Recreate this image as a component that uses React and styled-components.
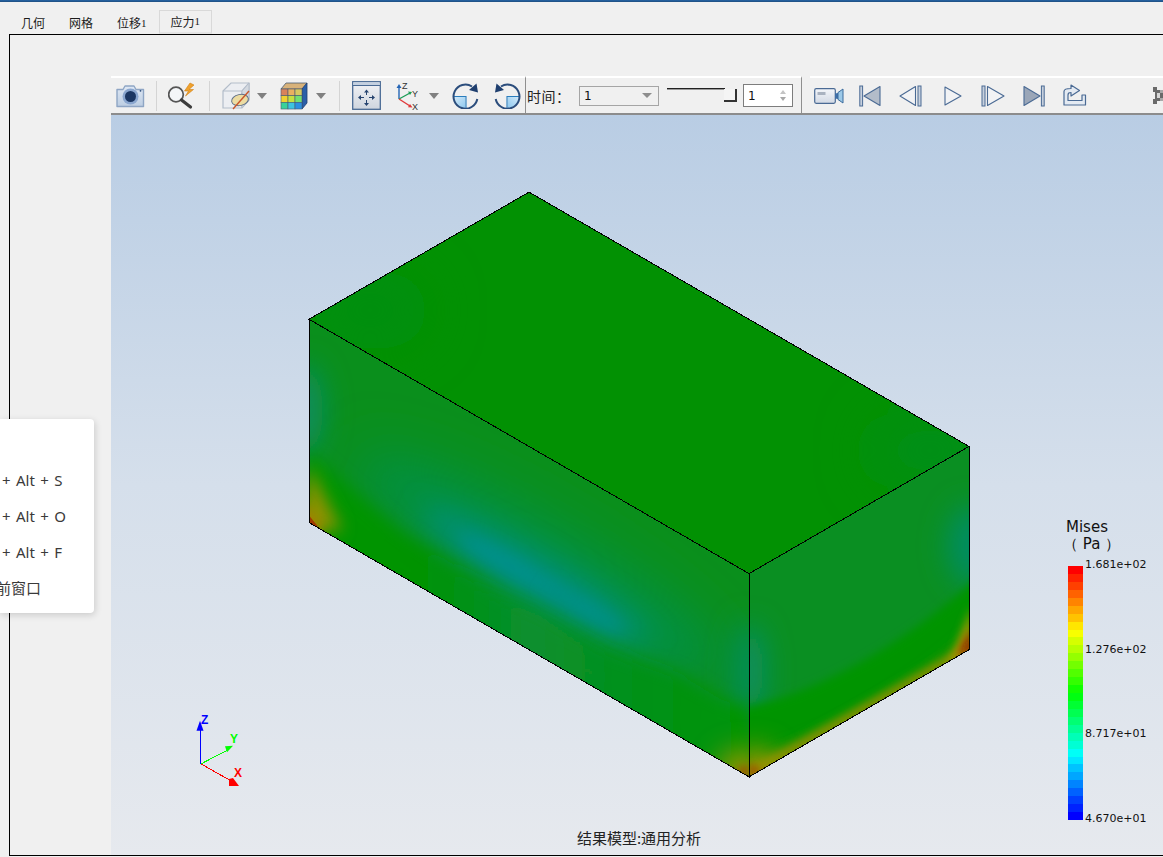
import styled, { createGlobalStyle } from "styled-components";

const GlobalStyle = createGlobalStyle`
  html, body {
    margin: 0;
    padding: 0;
    width: 100%;
    height: 100%;
    overflow: hidden;
    background: #f0f0f0;
  }
  #root {
    height: 100%;
  }
`;

const CJK = `"Noto Sans CJK SC", "Noto Sans", sans-serif`;

const Page = styled.div`
  position: relative;
  display: flex;
  flex-direction: column;
  width: 1163px;
  height: 857px;
  overflow: hidden;
  background: #f0f0f0;
  font-family: ${CJK};
  color: #222;
`;

const TitleEdge = styled.div`
  height: 2px;
  flex: none;
  background: linear-gradient(to bottom, #1d4f86 0, #2a6fb3 50%, #16385f 100%);
`;

const TabBar = styled.div`
  display: flex;
  align-items: flex-end;
  height: 32px;
  padding-left: 9px;
  flex: none;
`;

const Tab = styled.div`
  box-sizing: border-box;
  height: ${(p) => (p.$active ? "24px" : "22px")};
  padding: ${(p) => (p.$active ? "0 11px" : "0 12px")};
  display: flex;
  align-items: center;
  font-size: 12px;
  line-height: 1;
  color: #1c1c1c;
  background: #f0f0f0;
  border: ${(p) => (p.$active ? "1px solid #d9d9d9" : "none")};
  border-bottom: ${(p) => (p.$active ? "2px solid #e4e4e4" : "none")};
`;

const TabNum = styled.span`
  font-family: "Liberation Serif", serif;
  font-size: 11px;
`;

const Frame = styled.div`
  box-sizing: border-box;
  display: flex;
  height: 822px;
  margin-left: 9px;
  flex: none;
  border-top: 1px solid #000;
  border-left: 1px solid #000;
  border-bottom: 1px solid #000;
`;

const Gutter = styled.div`
  width: 101px;
  flex: none;
`;

const Main = styled.div`
  flex: 1;
  min-width: 0;
  display: flex;
  flex-direction: column;
  padding-top: 41px;
`;

const Toolbar = styled.div`
  box-sizing: border-box;
  display: flex;
  height: 39px;
  flex: none;
  border-bottom: 2px solid #8c8c8c;
`;

const ToolSection = styled.div`
  box-sizing: border-box;
  display: flex;
  align-items: center;
  height: 37px;
  width: ${(p) => p.$width}px;
  flex: none;
  border-top: ${(p) => (p.$bare ? "none" : "2px solid #fff")};
  border-right: ${(p) => (p.$divider ? "1px solid #8f8f8f" : "none")};
  padding-left: ${(p) => p.$pad || 0}px;
`;

const Tool = styled.div`
  display: flex;
  flex: none;
  align-items: center;
  justify-content: center;
  margin-left: ${(p) => p.$left || 0}px;
  svg {
    display: block;
  }
`;

const Sep = styled.div`
  width: 1px;
  height: 30px;
  flex: none;
  background: #d4d4d4;
  margin-left: ${(p) => p.$left}px;
`;

const Caret = styled.div`
  width: 0;
  height: 0;
  flex: none;
  margin-left: ${(p) => p.$left}px;
  border-left: 5px solid transparent;
  border-right: 5px solid transparent;
  border-top: 6px solid #808080;
`;

const TimeLabel = styled.div`
  font-size: 14px;
  letter-spacing: 0.5px;
  width: 52px;
  flex: none;
  white-space: nowrap;
`;

const SelectBox = styled.div`
  box-sizing: border-box;
  width: 80px;
  height: 20px;
  display: flex;
  align-items: center;
  justify-content: space-between;
  padding: 0 6px 0 4px;
  flex: none;
  border: 1px solid #a5a5a5;
  font-family: "DejaVu Sans", sans-serif;
  font-size: 12px;
  color: #111;
`;

const SmallCaret = styled.div`
  width: 0;
  height: 0;
  border-left: 5px solid transparent;
  border-right: 5px solid transparent;
  border-top: 5px solid #8d8d8d;
`;

const Slider = styled.div`
  position: relative;
  width: 70px;
  height: 14px;
  margin-left: 8px;
  margin-top: -2px;
  flex: none;
`;

const SliderTrack = styled.div`
  position: absolute;
  left: 0;
  right: 12px;
  top: 0;
  height: 2px;
  background: linear-gradient(to bottom, #222 0 50%, #9a9a9a 50% 100%);
`;

const SliderThumb = styled.div`
  position: absolute;
  right: 0;
  top: 1px;
  box-sizing: border-box;
  width: 13px;
  height: 13px;
  background: #f4f4f4;
  border-right: 2px solid #333;
  border-bottom: 2px solid #333;
`;

const SpinBox = styled.div`
  box-sizing: border-box;
  width: 50px;
  height: 23px;
  margin-left: 6px;
  display: flex;
  align-items: center;
  justify-content: space-between;
  padding: 0 6px 0 4px;
  flex: none;
  background: #fff;
  border: 1px solid #7d7d7d;
  font-family: "DejaVu Sans", sans-serif;
  font-size: 12px;
  color: #111;
`;

const SpinArrows = styled.div`
  display: flex;
  flex-direction: column;
  gap: 3px;
`;

const SpinArrow = styled.div`
  width: 0;
  height: 0;
  border-left: 3px solid transparent;
  border-right: 3px solid transparent;
  border-top: ${(p) => (p.$down ? "4px solid #a8a8a8" : "none")};
  border-bottom: ${(p) => (p.$down ? "none" : "4px solid #c4c4c4")};
`;

const Viewport = styled.div`
  position: relative;
  flex: 1;
  min-height: 0;
  overflow: hidden;
  background: linear-gradient(to bottom, #b9cde4 0%, #d5dfeb 50%, #e6e9ee 100%);
`;

const Scene = styled.svg`
  display: block;
  width: 100%;
  height: 100%;
`;

const Legend = styled.div`
  position: absolute;
  left: 955px;
  top: 404px;
  width: 100px;
`;

const LegendTitle = styled.div`
  font-family: "DejaVu Sans", sans-serif;
  font-size: 15px;
  line-height: 17px;
  color: #111;
  white-space: nowrap;
`;

const LegendUnit = styled.div`
  margin-left: -3px;
`;

const LegendBody = styled.div`
  display: flex;
  margin-top: 13px;
  margin-left: 2px;
`;

const ColorBar = styled.div`
  width: 15px;
  height: 254px;
  display: flex;
  flex-direction: column;
`;

const Band = styled.div`
  flex: 1;
`;

const LegendTicks = styled.div`
  height: 267px;
  margin-left: 2px;
  margin-top: -8px;
  display: flex;
  flex-direction: column;
  justify-content: space-between;
  font-family: "DejaVu Sans", sans-serif;
  font-size: 11px;
  line-height: 13px;
  color: #111;
  white-space: nowrap;
`;

const ModelCaption = styled.div`
  position: absolute;
  left: 0;
  right: 0;
  bottom: 8px;
  padding-left: 4px;
  text-align: center;
  font-size: 15px;
  line-height: 18px;
  color: #222;
`;

const ShortcutMenu = styled.div`
  position: absolute;
  left: 0;
  top: 419px;
  box-sizing: border-box;
  width: 94px;
  height: 194px;
  padding-top: 43px;
  overflow: hidden;
  background: #fff;
  border-radius: 0 4px 4px 0;
  box-shadow: 1px 2px 7px rgba(0, 0, 0, 0.16);
`;

const ShortcutRow = styled.div`
  height: 36px;
  line-height: 36px;
  padding-left: 2px;
  margin-left: ${(p) => p.$shift || 0}px;
  font-family: "Noto Sans", "Noto Sans CJK SC", sans-serif;
  font-size: 15px;
  word-spacing: 1.5px;
  color: #3a3a3a;
  white-space: nowrap;
`;

const BLUE = "#4a6a94";

const CameraIcon = () => (
  <svg width="29" height="25" viewBox="0 0 29 25">
    <defs>
      <linearGradient id="camBody" x1="0" y1="0" x2="0" y2="1">
        <stop offset="0" stopColor="#dfe8f4" />
        <stop offset="1" stopColor="#bccde2" />
      </linearGradient>
    </defs>
    <path d="M1 6.5h6l2-3.5h9l2 3.5h7.5v17H1z" fill="url(#camBody)" stroke="#8ea5c4" strokeWidth="1.4" strokeLinejoin="round" />
    <circle cx="14.5" cy="13.5" r="8" fill="#8aa6cf" />
    <circle cx="14.5" cy="13.5" r="5.5" fill="#1c3763" />
    <circle cx="24.5" cy="7.8" r="0.9" fill="#30507e" />
  </svg>
);

const QuickZoomIcon = () => (
  <svg width="30" height="28" viewBox="0 0 30 28">
    <path d="M22 1l-5.500 8h4l-3 5 8-6.500h-4.500L26 3z" fill="#f0a12c" stroke="#cf7f16" strokeWidth="0.6" />
    <circle cx="8" cy="12.500" r="7.300" fill="#f4f6f8" stroke="#555" strokeWidth="1.700" />
    <path d="M13.500 18l9 7" stroke="#3c3c3c" strokeWidth="3.200" strokeLinecap="round" />
  </svg>
);

const HideCubeIcon = () => (
  <svg width="29" height="29" viewBox="0 0 29 29">
    <path d="M1 10L9 2h18v17l-7 8H1z" fill="#eceef2" stroke="#b3bdca" strokeWidth="1.200" />
    <path d="M1 10h19v17M20 10l7-8" fill="none" stroke="#b3bdca" strokeWidth="1.200" />
    <path d="M20 10l7-8v17l-7 8z" fill="#d4d9e0" stroke="#b3bdca" strokeWidth="1" />
    <ellipse cx="18" cy="19" rx="8.500" ry="5.500" fill="#ecdca2" stroke="#5d6e88" strokeWidth="1" transform="rotate(-12 18 19)" />
    <path d="M11 28L27 10" stroke="#c9552a" strokeWidth="1.400" />
  </svg>
);

const ColorCubeIcon = () => {
  const rows = [
    ["#d9825a", "#e9b060", "#d8c860"],
    ["#f0d030", "#c4e040", "#72e070"],
    ["#38d29a", "#3cc4e0", "#2a90e0"],
  ];
  return (
    <svg width="28" height="28" viewBox="0 0 28 28">
      <path d="M1 7l5-6h21l-5 6z" fill="#d8b27a" stroke="#4a5a72" strokeWidth="0.8" />
      <path d="M22 7l5-6v20l-5 6z" fill="#2a5fa8" stroke="#213f70" strokeWidth="0.8" />
      {rows.map((row, r) =>
        row.map((color, c) => (
          <rect key={`${r}-${c}`} x={1 + c * 7} y={7 + r * 6.670} width="7" height="6.670" fill={color} stroke="#4a5a72" strokeWidth="0.6" />
        ))
      )}
    </svg>
  );
};

const FitIcon = () => (
  <svg width="29" height="29" viewBox="0 0 29 29">
    <defs>
      <linearGradient id="fitBg" x1="0" y1="0" x2="0" y2="1">
        <stop offset="0" stopColor="#f2f3f6" />
        <stop offset="1" stopColor="#cfd5de" />
      </linearGradient>
    </defs>
    <rect x="0.700" y="0.700" width="27.600" height="27.600" fill="url(#fitBg)" stroke={BLUE} strokeWidth="1.300" />
    <rect x="1.300" y="1.300" width="26.400" height="3" fill="#c4d0e0" />
    <path d="M1 4.500h27" stroke={BLUE} strokeWidth="1" />
    <path d="M14.500 8.500l-2.500 3h5zM14.500 25l-2.500-3h5zM6 16.500l3-2.500v5zM23 16.500l-3-2.500v5z" fill="#27446f" />
    <path d="M14.500 11v3M14.500 19v3M9 16.500h3M17 16.500h3" stroke="#27446f" strokeWidth="1" />
  </svg>
);

const AxesIcon = () => (
  <svg width="26" height="28" viewBox="0 0 26 28">
    <path d="M5 17V5" stroke="#2565b5" strokeWidth="1.400" />
    <path d="M5 2l-2.500 4h5z" fill="#2565b5" />
    <path d="M5 17l11-6" stroke="#1d9c56" strokeWidth="1.400" />
    <path d="M18 10l-4 -0.500 2 3.500z" fill="#1d9c56" />
    <path d="M5 17l11 7" stroke="#e0383a" strokeWidth="1.400" />
    <path d="M18.500 25.500l-4.500-0.300 2-3.200z" fill="#e0383a" />
    <text x="8" y="7" fontFamily="Liberation Sans, sans-serif" fontSize="9" fill="#333">Z</text>
    <text x="18" y="15" fontFamily="Liberation Sans, sans-serif" fontSize="9" fill="#333">Y</text>
    <text x="18" y="27.500" fontFamily="Liberation Sans, sans-serif" fontSize="9" fill="#333">X</text>
  </svg>
);

const RotateIcon = ({ flip, id }) => (
  <svg width="27" height="27" viewBox="0 0 27 27" style={flip ? { transform: "scaleX(-1)" } : undefined}>
    <defs>
      <linearGradient id={id} x1="0" y1="0" x2="1" y2="1">
        <stop offset="0" stopColor="#d6ebf9" />
        <stop offset="1" stopColor="#8ec8ee" />
      </linearGradient>
    </defs>
    <path d="M1.500 14.500h12v11.500A12 12 0 0 1 1.500 14.500z" fill={`url(#${id})`} />
    <path d="M1.500 14.500h12.500V26" fill="none" stroke="#2a7dbd" strokeWidth="1.100" />
    <path d="M20 4.500A12 12 0 1 0 25.300 17" fill="none" stroke="#2b4d7c" strokeWidth="2" />
    <path d="M24.500 1.500l1.500 9-9-2.500z" fill="#1f3f6f" />
  </svg>
);

const VideoIcon = () => (
  <svg width="30" height="18" viewBox="0 0 30 18">
    <defs>
      <linearGradient id="vidBody" x1="0" y1="0" x2="0" y2="1">
        <stop offset="0" stopColor="#f4f6fa" />
        <stop offset="1" stopColor="#d2d9e4" />
      </linearGradient>
    </defs>
    <rect x="0.700" y="1.700" width="20.600" height="14.600" rx="1.500" fill="url(#vidBody)" stroke={BLUE} strokeWidth="1.200" />
    <rect x="3.500" y="5" width="8" height="3" fill="#a9b2c0" />
    <path d="M21 6.500L24 6v6l-3-.5z" fill="#3f6fa8" />
    <path d="M24 5.500L29 2v14l-5-3.500z" fill="#9cc9e8" stroke="#3a6a9c" strokeWidth="1" />
  </svg>
);

const FirstIcon = () => (
  <svg width="22" height="22" viewBox="0 0 22 22">
    <rect x="0.800" y="1" width="2.800" height="20" fill="#c7d0dd" stroke={BLUE} strokeWidth="1" />
    <path d="M21 1.500v19L5 11z" fill="#b3bcc9" stroke={BLUE} strokeWidth="1.100" strokeLinejoin="round" />
  </svg>
);

const PrevIcon = () => (
  <svg width="23" height="22" viewBox="0 0 23 22">
    <path d="M16.500 1.500v19L1 11z" fill="#f2f3f5" stroke={BLUE} strokeWidth="1.100" strokeLinejoin="round" />
    <rect x="19" y="1" width="3" height="20" fill="#c7d0dd" stroke={BLUE} strokeWidth="1" />
  </svg>
);

const PlayIcon = () => (
  <svg width="18" height="20" viewBox="0 0 18 20">
    <path d="M1 1v18l16-9z" fill="#f2f3f5" stroke={BLUE} strokeWidth="1.100" strokeLinejoin="round" />
  </svg>
);

const NextIcon = () => (
  <svg width="24" height="22" viewBox="0 0 24 22">
    <rect x="1" y="1" width="3" height="20" fill="#c7d0dd" stroke={BLUE} strokeWidth="1" />
    <path d="M6.500 1.500v19L23 11z" fill="#f2f3f5" stroke={BLUE} strokeWidth="1.100" strokeLinejoin="round" />
  </svg>
);

const LastIcon = () => (
  <svg width="22" height="22" viewBox="0 0 22 22">
    <path d="M1 1.500v19L17 11z" fill="#9aa6b8" stroke={BLUE} strokeWidth="1.100" strokeLinejoin="round" />
    <rect x="18.400" y="1" width="2.800" height="20" fill="#c7d0dd" stroke={BLUE} strokeWidth="1" />
  </svg>
);

const ExportIcon = () => (
  <svg width="24" height="23" viewBox="0 0 24 23">
    <path
      d="M1 7.500C1 5.500 3 4.500 8 4.500V1l8.500 5.500L8 12V8.500C6 8.500 5 9 5 11v5.500h14V11h3.500v10H1z"
      fill="#e4eaf2"
      stroke={BLUE}
      strokeWidth="1.200"
      strokeLinejoin="round"
    />
  </svg>
);

const GripIcon = () => (
  <svg width="10" height="17" viewBox="0 0 10 17" shapeRendering="crispEdges">
    <path d="M0 0h4v3h3v3h3v5H7v3H4v3H0v-5h2V5H0z" fill="#6a6a6a" />
    <path d="M4 6h3v5H4z" fill="#d6d6d6" />
    <path d="M7 3h3v3H7zM7 11h3v3H7z" fill="#a8a8a8" />
  </svg>
);

// bands of the colour scale, red at the top, blue at the bottom
const BAND_COUNT = 32;
const bands = Array.from({ length: BAND_COUNT }, (_, i) => {
  const hue = (i / (BAND_COUNT - 1)) * 240;
  return `hsl(${Math.round(hue)}, 100%, 50%)`;
});

const FRONT = "309,319 749,573 749,776 309,522";
const RIGHT = "749,573 969,446 969,649 749,776";
const TOP = "529,192 969,446 749,573 309,319";

const Blur = ({ id, amount }) => (
  <filter id={id} x="-300%" y="-300%" width="700%" height="700%">
    <feGaussianBlur stdDeviation={amount} />
  </filter>
);

const StressScene = () => (
  <Scene viewBox="111 115 1052 739" preserveAspectRatio="none">
    <defs>
      <clipPath id="clipTop"><polygon points={TOP} /></clipPath>
      <clipPath id="clipFront"><polygon points={FRONT} /></clipPath>
      <clipPath id="clipRight"><polygon points={RIGHT} /></clipPath>
      <Blur id="blur4" amount="4" />
      <Blur id="blur8" amount="8" />
      <Blur id="blur14" amount="14" />
      <Blur id="blur26" amount="26" />
      <linearGradient id="lowerBand" gradientUnits="userSpaceOnUse" x1="309" y1="0" x2="749" y2="0">
        <stop offset="0" stopColor="#039503" />
        <stop offset="0.25" stopColor="#049303" />
        <stop offset="0.5" stopColor="#078f30" />
        <stop offset="0.75" stopColor="#069118" />
        <stop offset="1" stopColor="#039503" />
      </linearGradient>
    </defs>

    <g clipPath="url(#clipTop)">
      <polygon points={TOP} fill="#029103" />
      <ellipse cx="930" cy="450" rx="60" ry="40" fill="#068f14" filter="url(#blur26)" />
      <ellipse cx="370" cy="310" rx="60" ry="40" fill="#058f0e" filter="url(#blur26)" />
    </g>

    <g clipPath="url(#clipFront)">
      <polygon points={FRONT} fill="#0a8f1c" />
      <ellipse cx="305" cy="410" rx="18" ry="46" fill="#078d62" filter="url(#blur14)" />
      <ellipse cx="540" cy="565" rx="210" ry="40" transform="rotate(30 540 565)" fill="#05904a" filter="url(#blur26)" />
      <ellipse cx="535" cy="575" rx="130" ry="20" transform="rotate(30 535 575)" fill="#008f78" filter="url(#blur14)" />
      <ellipse cx="510" cy="565" rx="60" ry="9" transform="rotate(30 510 565)" fill="#00908e" filter="url(#blur8)" />
      <ellipse cx="585" cy="608" rx="45" ry="8" transform="rotate(30 585 608)" fill="#00908a" filter="url(#blur8)" />
      <ellipse cx="748" cy="670" rx="14" ry="50" fill="#068d5e" filter="url(#blur14)" />
      <polygon points="309,452 400,530 500,594 600,646 680,674 720,698 749,708 760,800 300,540" fill="url(#lowerBand)" filter="url(#blur8)" />
      <polygon points="309,466 342,530 300,530" fill="#8f9200" filter="url(#blur8)" />
      <polygon points="303,498 325,530 303,530" fill="#a08400" filter="url(#blur4)" />
      <polygon points="309,515 318,526 309,525" fill="#a03a00" />
      <ellipse cx="742" cy="770" rx="24" ry="20" fill="#a09600" filter="url(#blur14)" />
      <polygon points="734,770 749,778 749,764" fill="#a04a00" filter="url(#blur4)" />
    </g>

    <g clipPath="url(#clipRight)">
      <polygon points={RIGHT} fill="#0a8f22" />
      <ellipse cx="972" cy="545" rx="24" ry="40" fill="#058d62" filter="url(#blur14)" />
      <ellipse cx="750" cy="670" rx="14" ry="46" fill="#078e6a" filter="url(#blur14)" />
      <path d="M735 708C800 700 900 650 985 570V680L735 800z" fill="#049402" filter="url(#blur4)" />
      <path d="M740 762C820 745 900 700 980 630V670L740 800z" fill="#3f9200" filter="url(#blur8)" />
      <path d="M749 780L975 650 975 640 749 768z" fill="#8a9000" filter="url(#blur4)" />
      <ellipse cx="755" cy="765" rx="20" ry="18" fill="#a09600" filter="url(#blur14)" />
      <polygon points="948,665 972,606 972,655" fill="#a59a00" filter="url(#blur4)" />
      <polygon points="958,656 972,628 972,650" fill="#8c0c00" filter="url(#blur4)" />
      <polygon points="749,778 762,770 749,762" fill="#a04a00" filter="url(#blur4)" />
    </g>

    <g fill="none" stroke="#000" strokeWidth="1" shapeRendering="crispEdges">
      <polygon points={TOP} />
      <polygon points={FRONT} />
      <polygon points={RIGHT} />
    </g>

    <g shapeRendering="crispEdges">
      <path d="M200.500 763V727" stroke="#0000ff" strokeWidth="1" />
      <path d="M200 720l-3.500 10h7z" fill="#0000ff" shapeRendering="auto" />
      <path d="M201 763l27-14" stroke="#00ff00" strokeWidth="1" />
      <path d="M233 745l-8 0.500 2 6 z" fill="#00ff00" shapeRendering="auto" />
      <path d="M201 763l30 17" stroke="#ff0000" strokeWidth="1" />
      <path d="M239 785l-10 0 0-7 4-1z" fill="#ff0000" shapeRendering="auto" />
    </g>
    <g fontFamily="Liberation Sans, sans-serif" fontWeight="700" fontSize="12">
      <text x="201" y="723" fill="#0000ff">Z</text>
      <text x="230" y="742" fill="#00ff00">Y</text>
      <text x="234" y="776" fill="#ff0000">X</text>
    </g>
  </Scene>
);

const App = () => (
  <Page>
    <GlobalStyle />
    <TitleEdge />
    <TabBar>
      <Tab>几何</Tab>
      <Tab>网格</Tab>
      <Tab>位移<TabNum>1</TabNum></Tab>
      <Tab $active>应力<TabNum>1</TabNum></Tab>
    </TabBar>
    <Frame>
      <Gutter />
      <Main>
        <Toolbar>
          <ToolSection $width={415} $divider $pad={5}>
            <Tool><CameraIcon /></Tool>
            <Sep $left={11} />
            <Tool $left={11}><QuickZoomIcon /></Tool>
            <Sep $left={11} />
            <Tool $left={12}><HideCubeIcon /></Tool>
            <Caret $left={6} />
            <Tool $left={13}><ColorCubeIcon /></Tool>
            <Caret $left={8} />
            <Sep $left={13} />
            <Tool $left={12}><FitIcon /></Tool>
            <Tool $left={13}><AxesIcon /></Tool>
            <Caret $left={9} />
            <Tool $left={13}><RotateIcon id="rotCw" /></Tool>
            <Tool $left={15}><RotateIcon id="rotCcw" flip /></Tool>
          </ToolSection>
          <ToolSection $width={276} $divider $pad={1}>
            <TimeLabel>时间：</TimeLabel>
            <SelectBox>1<SmallCaret /></SelectBox>
            <Slider>
              <SliderTrack />
              <SliderThumb />
            </Slider>
            <SpinBox>
              1
              <SpinArrows>
                <SpinArrow />
                <SpinArrow $down />
              </SpinArrows>
            </SpinBox>
          </ToolSection>
          <ToolSection $width={8} $bare />
          <ToolSection $width={353} $pad={4}>
            <Tool><VideoIcon /></Tool>
            <Tool $left={15}><FirstIcon /></Tool>
            <Tool $left={18}><PrevIcon /></Tool>
            <Tool $left={22}><PlayIcon /></Tool>
            <Tool $left={19}><NextIcon /></Tool>
            <Tool $left={18}><LastIcon /></Tool>
            <Tool $left={18}><ExportIcon /></Tool>
            <Tool $left={66}><GripIcon /></Tool>
          </ToolSection>
        </Toolbar>
        <Viewport>
          <StressScene />
          <Legend>
            <LegendTitle>
              Mises
              <LegendUnit>（ Pa ）</LegendUnit>
            </LegendTitle>
            <LegendBody>
              <ColorBar>
                {bands.map((color) => (
                  <Band key={color} style={{ background: color }} />
                ))}
              </ColorBar>
              <LegendTicks>
                <span>1.681e+02</span>
                <span>1.276e+02</span>
                <span>8.717e+01</span>
                <span>4.670e+01</span>
              </LegendTicks>
            </LegendBody>
          </Legend>
          <ModelCaption>结果模型:通用分析</ModelCaption>
        </Viewport>
      </Main>
    </Frame>
    <ShortcutMenu>
      <ShortcutRow>+ Alt + S</ShortcutRow>
      <ShortcutRow>+ Alt + O</ShortcutRow>
      <ShortcutRow>+ Alt + F</ShortcutRow>
      <ShortcutRow $shift={-6}>前窗口</ShortcutRow>
    </ShortcutMenu>
  </Page>
);

export default App;
